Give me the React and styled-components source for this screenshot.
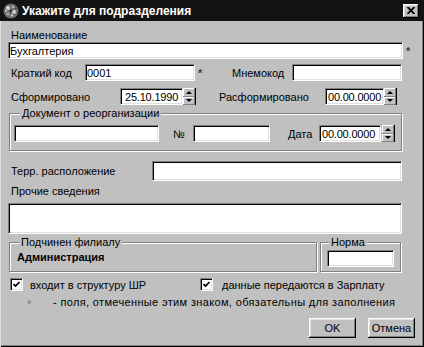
import React from "react";
import styled, { createGlobalStyle } from "styled-components";

const GlobalStyle = createGlobalStyle`
	html, body {
		margin: 0;
		padding: 0;
		background: #c0c0c0;
	}
	body {
		font-family: "Liberation Sans", Arial, sans-serif;
		font-size: 11px;
		color: #000;
	}
	* {
		box-sizing: border-box;
	}
`;

const Window = styled.div`
	width: 424px;
	height: 347px;
	display: flex;
	flex-direction: column;
	background: #c0c0c0;
	overflow: hidden;
`;

const TitleBar = styled.div`
	flex: 0 0 21px;
	display: flex;
	align-items: center;
	padding: 0 5px 0 3px;
	background: #131313;
`;

const TitleText = styled.span`
	flex: 1;
	margin-left: 3px;
	color: #fff;
	font-size: 12px;
	font-weight: 700;
	white-space: nowrap;
`;

const CloseButton = styled.div`
	width: 16px;
	height: 14px;
	display: flex;
	align-items: center;
	justify-content: center;
	background: #c0c0c0;
	box-shadow: inset -1px -1px #000, inset 1px 1px #fff,
		inset -2px -2px #808080, inset 2px 2px #dfdfdf;
`;

const Body = styled.div`
	flex: 1;
	display: flex;
	flex-direction: column;
	padding-left: 8px;
	box-shadow: inset 1px 0 #dfdfdf, inset -1px -1px #000,
		inset -2px -2px #808080;
`;

const Row = styled.div`
	flex: 0 0 auto;
	display: flex;
	align-items: center;
	height: ${p => p.$h || 17}px;
	margin-top: ${p => p.$mt || 0}px;
	margin-left: ${p => p.$ml || 0}px;
`;

const Label = styled.span`
	flex: 0 0 auto;
	width: ${p => (p.$w ? `${p.$w}px` : "auto")};
	padding-left: ${p => p.$pl || 0}px;
	margin-left: ${p => p.$ml || 0}px;
	line-height: 14px;
	white-space: nowrap;
	font-weight: ${p => (p.$bold ? 700 : 400)};
	letter-spacing: ${p => p.$ls || 0}px;
`;

const Field = styled.div`
	flex: 0 0 auto;
	width: ${p => p.$w}px;
	height: ${p => p.$h || 17}px;
	margin-left: ${p => p.$ml || 0}px;
	padding: 2px 0 0 ${p => (p.$pad !== undefined ? p.$pad : 1)}px;
	line-height: 13px;
	letter-spacing: ${p => (p.$pad !== undefined ? "-0.2px" : "0")};
	background: #fff;
	border: 1px solid;
	border-color: #808080 #fff #fff #808080;
	box-shadow: inset 1px 1px #000, inset -1px -1px #dfdfdf;
	overflow: hidden;
	white-space: nowrap;
`;

const Star = styled.span`
	flex: 0 0 auto;
	align-self: flex-start;
	width: ${p => p.$w || 8}px;
	margin-left: ${p => p.$ml || 3}px;
	margin-top: ${p => p.$top || 4}px;
	color: ${p => (p.$light ? "#8a8a8a" : "#404040")};
	font-size: 11px;
	font-weight: 700;
	line-height: 10px;
`;

const Spin = styled.div`
	flex: 0 0 auto;
	width: 13px;
	height: 17px;
	margin-left: ${p => p.$ml || 0}px;
	display: flex;
	flex-direction: column;
	padding-right: 1px;
	background: #000;
`;

const SpinHalf = styled.div`
	flex: 1;
	display: flex;
	align-items: center;
	justify-content: center;
	background: #c0c0c0;
	box-shadow: inset -1px -1px #808080, inset 1px 1px #fff;
`;

const Arrow = styled.span`
	width: 0;
	height: 0;
	border-left: 3px solid transparent;
	border-right: 3px solid transparent;
	${p =>
		p.$down
			? "border-top: 3px solid #000;"
			: "border-bottom: 3px solid #000;"}
`;

const Group = styled.div`
	flex: 0 0 auto;
	display: flex;
	flex-direction: column;
	width: ${p => p.$w}px;
	margin-top: ${p => p.$mt || 0}px;
	margin-left: ${p => p.$ml || 0}px;
	padding-bottom: ${p => p.$pb || 0}px;
	border: 1px solid #808080;
	box-shadow: inset 1px 1px #fff, 1px 1px #fff;
`;

const Legend = styled.span`
	align-self: flex-start;
	height: 13px;
	margin: -7px 0 0 ${p => p.$ml || 0}px;
	padding: 0 2px;
	line-height: 13px;
	background: #c0c0c0;
	white-space: nowrap;
`;

const GroupRow = styled.div`
	flex: 0 0 auto;
	display: flex;
	gap: 3px;
	margin: ${p => p.$mt || 0}px 0 0 1px;
`;

const CheckItem = styled.div`
	flex: 0 0 auto;
	display: flex;
	align-items: center;
	width: ${p => (p.$w ? `${p.$w}px` : "auto")};
	padding-left: ${p => p.$pl || 0}px;
`;

const CheckBox = styled.div`
	width: 13px;
	height: 13px;
	display: flex;
	align-items: center;
	justify-content: center;
	background: #fff;
	border: 1px solid;
	border-color: #808080 #fff #fff #808080;
	box-shadow: inset 1px 1px #000, inset -1px -1px #dfdfdf;
`;

const ButtonRow = styled.div`
	flex: 0 0 auto;
	display: flex;
	justify-content: flex-end;
	gap: 12px;
	height: 20px;
	margin-top: 9px;
	padding-right: 9px;
`;

const Button = styled.div`
	width: 47px;
	height: 20px;
	display: flex;
	align-items: center;
	justify-content: center;
	background: #c0c0c0;
	box-shadow: inset -1px -1px #000, inset 1px 1px #fff,
		inset -2px -2px #808080, inset 2px 2px #dfdfdf;
`;

const AppIcon = () => (
	<svg width="16" height="16" viewBox="0 0 16 16">
		<circle cx="8" cy="8" r="7.5" fill="#6c6c6c" />
		<circle cx="5" cy="5" r="2" fill="#d8d8d8" />
		<circle cx="10" cy="4" r="1.3" fill="#bdbdbd" />
		<circle cx="11" cy="9" r="2" fill="#cfcfcf" />
		<circle cx="5" cy="11" r="1.6" fill="#a8a8a8" />
		<circle cx="8" cy="8" r="1.2" fill="#303030" />
		<circle cx="9" cy="12.5" r="1.1" fill="#e0e0e0" />
		<circle cx="3" cy="8" r="0.9" fill="#e8e8e8" />
		<circle cx="13" cy="5.5" r="0.8" fill="#3a3a3a" />
	</svg>
);

const CloseIcon = () => (
	<svg width="8" height="7" viewBox="0 0 8 7">
		<path d="M0.5 0 L7.5 7 M7.5 0 L0.5 7" stroke="#000" strokeWidth="1.8" />
	</svg>
);

const CheckMark = () => (
	<svg width="7" height="7" viewBox="0 0 7 7">
		<path
			d="M0.5 3 L2.5 5 L6.5 1"
			fill="none"
			stroke="#000"
			strokeWidth="1.7"
		/>
	</svg>
);

const Spinner = ({ ml }) => (
	<Spin $ml={ml}>
		<SpinHalf>
			<Arrow />
		</SpinHalf>
		<SpinHalf>
			<Arrow $down />
		</SpinHalf>
	</Spin>
);

const App = () => {
	return (
		<>
			<GlobalStyle />
			<Window>
				<TitleBar>
					<AppIcon />
					<TitleText>Укажите для подразделения</TitleText>
					<CloseButton>
						<CloseIcon />
					</CloseButton>
				</TitleBar>
				<Body>
					<Row $h={14} $mt={7}>
						<Label $pl={3}>Наименование</Label>
					</Row>
					<Row>
						<Field $w={395}>Бухгалтерия</Field>
						<Star $ml={3}>*</Star>
					</Row>
					<Row $mt={5}>
						<Label $w={77} $pl={3}>
							Краткий код
						</Label>
						<Field $w={110}>0001</Field>
						<Star $ml={3}>*</Star>
						<Label $w={60} $ml={26}>
							Мнемокод
						</Label>
						<Field $w={110} />
					</Row>
					<Row $mt={7}>
						<Label $w={112} $pl={3}>
							Сформировано
						</Label>
						<Field $w={63} $pad={4}>
							25.10.1990
						</Field>
						<Spinner />
						<Label $w={129} $pl={23}>
							Расформировано
						</Label>
						<Field $w={59} $pad={2}>
							00.00.0000
						</Field>
						<Spinner />
					</Row>
					<Group $w={393} $mt={8} $ml={1} $pb={8}>
						<Legend $ml={10}>Документ о реорганизации</Legend>
						<Row $mt={5}>
							<Field $w={145} $ml={4} />
							<Label $w={34} $pl={14}>
								№
							</Label>
							<Field $w={77} />
							<Label $w={49} $pl={18}>
								Дата
							</Label>
							<Field $w={62} $pad={2}>
								00.00.0000
							</Field>
							<Spinner ml={1} />
						</Row>
					</Group>
					<Row $h={20} $mt={10}>
						<Label $w={144} $pl={3}>
							Терр. расположение
						</Label>
						<Field $w={250} $h={20} />
					</Row>
					<Row $h={14} $mt={3}>
						<Label $pl={3}>Прочие сведения</Label>
					</Row>
					<Row $h={31} $mt={5}>
						<Field $w={394} $h={31} />
					</Row>
					<GroupRow $mt={8}>
						<Group $w={308} $pb={7}>
							<Legend $ml={9}>Подчинен филиалу</Legend>
							<Row $h={14} $mt={1}>
								<Label $pl={7} $bold>
									Администрация
								</Label>
							</Row>
						</Group>
						<Group $w={81} $pb={4}>
							<Legend $ml={8}>Норма</Legend>
							<Row $mt={1}>
								<Field $w={67} $ml={6} />
							</Row>
						</Group>
					</GroupRow>
					<Row $h={13} $mt={6}>
						<CheckItem $w={192} $pl={2}>
							<CheckBox>
								<CheckMark />
							</CheckBox>
							<Label $ml={7}>входит в структуру ШР</Label>
						</CheckItem>
						<CheckItem>
							<CheckBox>
								<CheckMark />
							</CheckBox>
							<Label $ml={9}>данные передаются в Зарплату</Label>
						</CheckItem>
					</Row>
					<Row $h={14} $mt={4}>
						<Star $light $ml={19} $w={26} $top={4}>
							*
						</Star>
						<Label $ls={0.35}>
							- поля, отмеченные этим знаком, обязательны для
							заполнения
						</Label>
					</Row>
					<ButtonRow>
						<Button>OK</Button>
						<Button>Отмена</Button>
					</ButtonRow>
				</Body>
			</Window>
		</>
	);
};

export default App;
